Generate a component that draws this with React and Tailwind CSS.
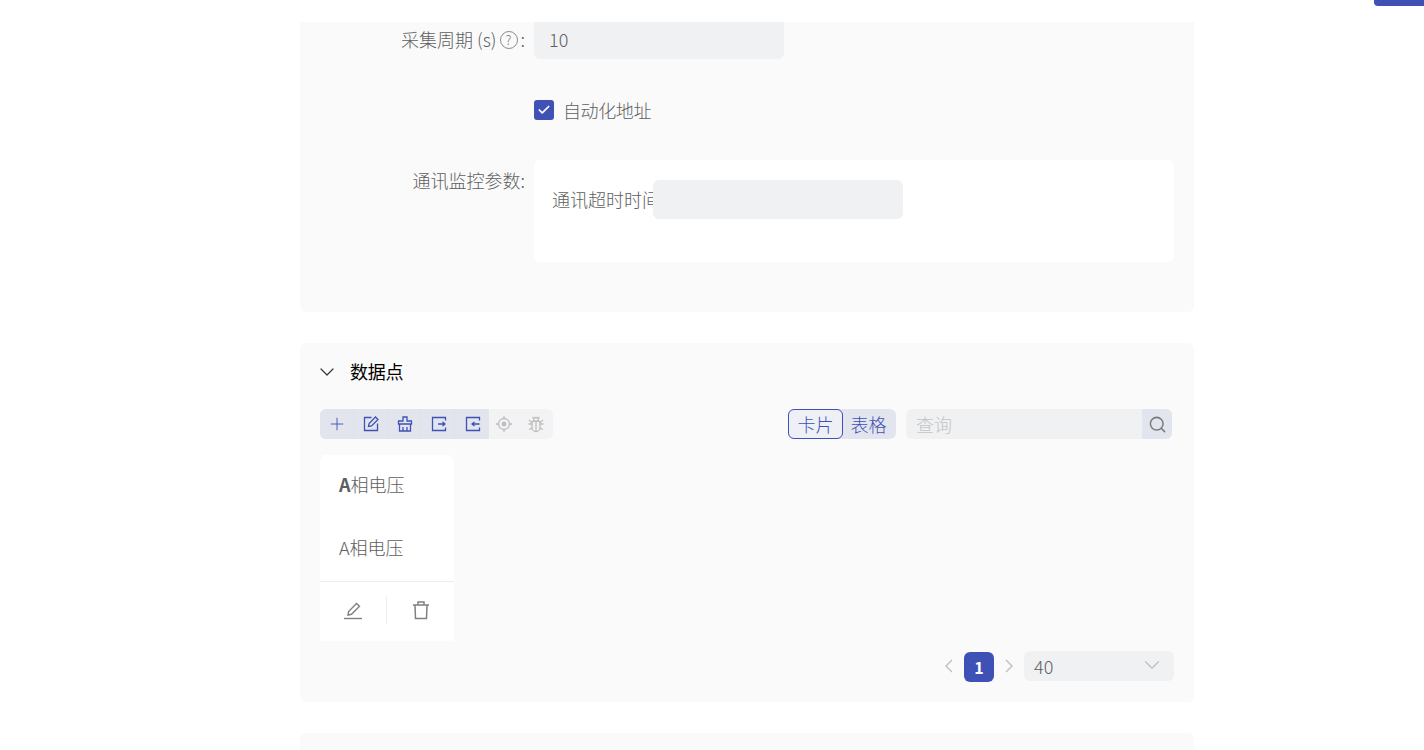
import React from 'react'
import { Check, ChevronDown, Search, Plus } from 'lucide-react'

const font = { fontFamily: '"Segoe UI", "Noto Sans CJK SC", sans-serif' }

const Icon = ({ size = 18, width = 1.3, children }) => (
    <svg width={size} height={size} viewBox="0 0 18 18" fill="none" stroke="currentColor" strokeWidth={width}>
        {children}
    </svg>
)

const EditIcon = () => (
    <Icon>
        <path d="M9.500 2.500h-7v13h13V8.500" />
        <path d="M6.500 11.500l.6-3L13.500 2l2.500 2.500-6.500 6.400z" />
    </Icon>
)

const ClearIcon = () => (
    <Icon>
        <path d="M7 2h4v4h4.500v3h-13V6H7z" />
        <path d="M3.500 9v7h11V9M7 12v4M11 12v4" />
    </Icon>
)

const ExportIcon = () => (
    <Icon>
        <path d="M15.500 5.500V2.500h-13v13h13v-3" />
        <path d="M8 9h7M12.500 7l2.500 2-2.500 2" />
    </Icon>
)

const ImportIcon = () => (
    <Icon>
        <path d="M15.500 5.500V2.500h-13v13h13v-3" />
        <path d="M15.500 9h-7M10.500 7L8 9l2.500 2" />
    </Icon>
)

const TargetIcon = () => (
    <Icon>
        <circle cx="9" cy="9" r="5.500" />
        <circle cx="9" cy="9" r="1.800" fill="currentColor" />
        <path d="M9 1v2.500M9 14.500V17M1 9h2.500M14.500 9H17" />
    </Icon>
)

const BugIcon = () => (
    <Icon>
        <path d="M5 7.500c0-1 1-1.500 4-1.500s4 .5 4 1.500V13c0 2-2 3.500-4 3.500S5 15 5 13z" />
        <path d="M6.500 6c0-2.500 1-3.500 2.500-3.500S11.500 3.500 11.500 6M5.500 2l2 1.500M12.500 2l-2 1.500" />
        <path d="M5 9H1.500M13 9h3.500M5 13l-3 1.500M13 13l3 1.500M2 5l3 2.500M16 5l-3 2.500M9 6v10.500" />
    </Icon>
)

const PenIcon = () => (
    <svg width="20" height="20" viewBox="0 0 20 20" fill="none" stroke="currentColor" strokeWidth="1.4">
        <path d="M5 15l.6-3.500L13.500 3.500l3 2.800-8 8z" />
        <path d="M1 18.500h18" />
    </svg>
)

const BinIcon = () => (
    <svg width="18" height="20" viewBox="0 0 18 20" fill="none" stroke="currentColor" strokeWidth="1.5">
        <path d="M1 5h16M6 5V2h6v3M3 5l.5 13.500h11L15 5" />
    </svg>
)

const PagerArrow = ({ d }) => (
    <svg width="10" height="14" viewBox="0 0 10 14" fill="none" stroke="currentColor" strokeWidth="1.3" className="text-[#bdbdbd]">
        <path d={d} />
    </svg>
)

const tools = [
    { key: 'add', icon: <Plus size={20} strokeWidth={1.1} /> },
    { key: 'edit', icon: <EditIcon /> },
    { key: 'clear', icon: <ClearIcon /> },
    { key: 'export', icon: <ExportIcon /> },
    { key: 'import', icon: <ImportIcon /> }
]

const App = () => {
    return (
        <div style={font} className="relative h-[750px] overflow-hidden bg-white pt-[22px] text-[18px] text-[#5e5e5e] font-light">
            <div className="absolute right-0 top-0 h-[6px] w-[50px] rounded-bl-[4px] bg-[#3f51b5]" />

            <div className="ml-[300px] w-[894px]">
                <div className="h-[290px] rounded-b-[6px] bg-[#fafafa] pr-5">
                    <div className="flex">
                        <div className="flex h-[35px] w-[234px] shrink-0 items-center justify-end pr-[9px]">
                            采集周期 (s)
                            <span className="ml-[3px] flex h-[18px] w-[18px] items-center justify-center rounded-full border border-[#8c8c8c] text-[13px] leading-none text-[#7c7c7c]">?</span>
                            <span className="ml-[3px]">:</span>
                        </div>
                        <div className="flex h-[37px] w-[250px] items-center rounded-b-[6px] bg-[#f0f1f3] pb-[2px] pl-[15px]">10</div>
                    </div>

                    <div className="mt-[41px] flex h-[20px] items-center pl-[234px]">
                        <div className="flex h-5 w-5 items-center justify-center rounded-[3px] bg-[#3f51b5]">
                            <Check size={14} strokeWidth={3} className="text-white" />
                        </div>
                        <span className="ml-[9px] tracking-[-0.4px]">自动化地址</span>
                    </div>

                    <div className="mt-[40px] flex">
                        <div className="w-[234px] shrink-0 pr-[9px] pt-[7px] text-right">通讯监控参数:</div>
                        <div className="h-[102px] flex-1 rounded-[6px] bg-white pl-[18px] pt-5">
                            <div className="flex items-center">
                                <span className="w-[101px] shrink-0 whitespace-nowrap">通讯超时时间</span>
                                <div className="relative h-[39px] w-[250px] rounded-[6px] bg-[#f0f1f3]" />
                            </div>
                        </div>
                    </div>
                </div>

                <div className="mt-[31px] h-[359px] rounded-[6px] bg-[#fafafa] px-5">
                    <div className="flex h-[57px] items-center text-black font-normal">
                        <ChevronDown size={24} strokeWidth={1.2} className="-ml-[5px] text-[#333]" />
                        <span className="ml-[11px] tracking-[-0.2px]">数据点</span>
                    </div>

                    <div className="mt-[9px] flex h-[30px] items-center pr-[2px]">
                        <div className="flex rounded-[6px] bg-[#f3f3f5]">
                            <div className="flex overflow-hidden rounded-l-[6px] bg-[#e3e5ee] text-[#3f51b5]">
                                {tools.map((t) => (
                                    <div key={t.key} className="flex h-[30px] w-[33.8px] items-center justify-center border-r border-[#dfe2ec] pl-[2px] last:border-r-0">
                                        {t.icon}
                                    </div>
                                ))}
                            </div>
                            <div className="flex h-[30px] w-[31px] items-center justify-center text-[#bdbdbd]">
                                <TargetIcon />
                            </div>
                            <div className="flex h-[30px] w-[33px] items-center justify-center text-[#bdbdbd]">
                                <BugIcon />
                            </div>
                        </div>

                        <div className="ml-auto flex h-[30px] w-[108px] rounded-[6px] bg-[#e3e5ee] text-[#3f51b5]">
                            <div className="flex w-[55px] items-center justify-center rounded-[6px] border border-[#3f51b5] bg-[#eef0f5]">卡片</div>
                            <div className="flex flex-1 items-center justify-center pr-[2px]">表格</div>
                        </div>

                        <div className="ml-[10px] flex h-[30px] w-[266px] rounded-[6px] bg-[#f0f1f3]">
                            <div className="flex flex-1 items-center pl-[10px] text-[#c4c4c4]">查询</div>
                            <div className="flex w-[30px] items-center justify-center rounded-r-[6px] bg-[#e3e5ee] text-[#7a7a7a]">
                                <Search size={19} strokeWidth={1.9} />
                            </div>
                        </div>
                    </div>

                    <div className="mt-[16px] h-[186px] w-[134px] rounded-t-[6px] bg-white">
                        <div className="h-[127px] border-b border-[#eeeeee] pl-[19px]">
                            <div className="pt-[16px] leading-[26px]"><span className="font-semibold">A</span>相电压</div>
                            <div className="pt-[37px] leading-[26px]">A相电压</div>
                        </div>
                        <div className="flex h-[58px] items-center pb-[2px] text-[#808080]">
                            <div className="flex h-[28px] w-[67px] items-center justify-center border-r border-[#eeeeee]">
                                <PenIcon />
                            </div>
                            <div className="flex flex-1 items-center justify-center">
                                <BinIcon />
                            </div>
                        </div>
                    </div>

                    <div className="mt-[10px] flex h-[30px] items-center justify-end">
                        <PagerArrow d="M8 1L2 7l6 6" />
                        <div className="ml-[10px] mt-[2px] flex h-[30px] w-[30px] items-center justify-center rounded-[6px] bg-[#3f51b5] text-[16px] font-bold text-white">1</div>
                        <div className="ml-[10px]">
                            <PagerArrow d="M2 1l6 6-6 6" />
                        </div>
                        <div className="ml-[10px] flex h-[30px] w-[150px] items-center justify-between rounded-[6px] bg-[#f0f1f3] pl-[10px] pr-[9px]">
                            40
                            <ChevronDown size={26} strokeWidth={1} className="mb-[3px] text-[#bdbdbd]" />
                        </div>
                    </div>
                </div>

                <div className="mt-[31px] h-[40px] rounded-t-[6px] bg-[#fafafa]" />
            </div>
        </div>
    )
}

export default App
